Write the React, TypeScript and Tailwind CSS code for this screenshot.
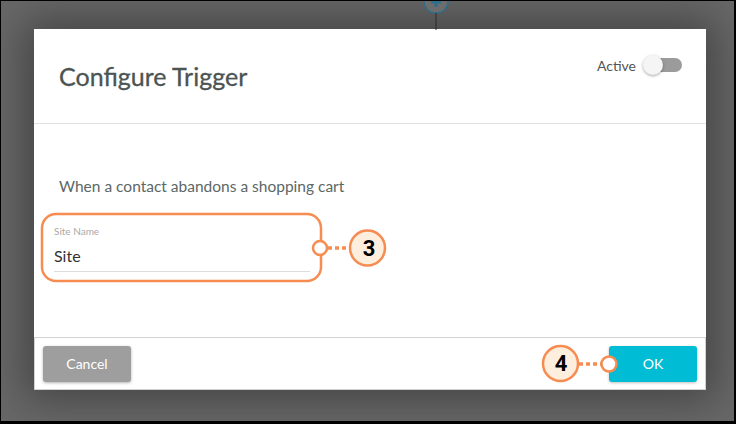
import React from "react";

export default function App() {
  return (
    <div className="relative w-[736px] h-[424px] overflow-hidden border-t border-l border-r-2 border-b-[3px] border-black bg-[#686868] font-['Lato','Noto_Sans',sans-serif]">
      {/* flow connector above modal */}
      <svg className="absolute left-[421px] top-[-1px]" width="30" height="30" viewBox="0 0 30 30">
        <circle cx="14" cy="1" r="12" fill="#6d6d6d" stroke="#2f6f8c" strokeWidth="1.5" />
        <path d="M14 -4 V7 M9 2 H19" stroke="#2f6f8c" strokeWidth="3" />
        <line x1="14" y1="13" x2="14" y2="30" stroke="#2b2b2b" strokeWidth="1" />
      </svg>

      <div className="ml-[33px] mt-[28px] w-[672px] h-[361px] bg-white flex flex-col shadow-[0_0_40px_10px_rgba(0,0,0,0.35)]">
        {/* header */}
        <div className="h-[95px] border-b border-[#e2e2e2] flex justify-between pl-[25px] pr-[24px]">
          <h1 className="self-center mt-[1px] text-[25px] leading-none text-[#4b5453] font-normal [-webkit-text-stroke:0.3px_#4b5453]">Configure Trigger</h1>
          <div className="flex items-center gap-[7px] h-[20px] mt-[26px]">
            <span className="text-[14px] text-[#555]">Active</span>
            <div className="relative w-[39px] h-[20px] flex items-center">
              <div className="ml-[3px] w-[36px] h-[14px] rounded-full bg-[#9b9b9b]" />
              <div className="absolute left-0 top-0 w-[20px] h-[20px] rounded-full bg-[#f5f5f5] shadow-[0_1px_3px_rgba(0,0,0,0.35)]" />
            </div>
          </div>
        </div>

        {/* body */}
        <div className="flex-1 flex flex-col pt-[52px]">
          <p className="pl-[25px] text-[15.5px] leading-[20px] text-[#5c6766]">When a contact abandons a shopping cart</p>
          <div className="ml-[20px] mt-[29px] w-[256px] flex flex-col">
            <span className="text-[10px] leading-[12px] text-[#a8a8a8]">Site Name</span>
            <span className="mt-[10px] text-[16px] leading-[18px] text-[#333]">Site</span>
            <div className="mt-[6px] h-px bg-[#dcdcdc]" />
          </div>
        </div>

        {/* footer */}
        <div className="h-[53px] border border-[#d2d2d2] flex items-center justify-between px-[8px]">
          <button className="w-[88px] h-[36px] rounded-[3px] bg-[#9e9e9e] text-white text-[14px] shadow-[0_1px_3px_rgba(0,0,0,0.3)]">Cancel</button>
          <button className="w-[88px] h-[36px] rounded-[3px] bg-[#00bcd4] text-white text-[14px] shadow-[0_1px_3px_rgba(0,0,0,0.25)]">OK</button>
        </div>
      </div>

      {/* annotations */}
      <svg className="absolute left-[-1px] top-[-1px]" width="736" height="424" viewBox="0 0 736 424">
        <rect x="42" y="214" width="279" height="67" rx="14" fill="none" stroke="#f68c52" strokeWidth="2.5" />
        <line x1="328" y1="248" x2="349" y2="248" stroke="#f68c52" strokeWidth="3.5" strokeDasharray="4 3" />
        <circle cx="320" cy="248" r="7" fill="#fff" stroke="#f68c52" strokeWidth="2.5" />
        <circle cx="367.5" cy="248" r="17.5" fill="#fdeedd" stroke="#f68c52" strokeWidth="2.5" />

        <line x1="579" y1="364" x2="601" y2="364" stroke="#f68c52" strokeWidth="3.5" strokeDasharray="4 3" />
        <circle cx="609" cy="364" r="7.5" fill="#fff" stroke="#f68c52" strokeWidth="2.5" />
        <circle cx="560.5" cy="363.5" r="17.5" fill="#fdeedd" stroke="#f68c52" strokeWidth="2.5" />
      </svg>
      <span className="absolute left-[357px] top-[235px] w-[22px] text-center text-[22px] leading-[26px] font-bold text-black font-['Roboto',sans-serif]">3</span>
      <span className="absolute left-[549px] top-[350px] w-[22px] text-center text-[22px] leading-[26px] font-bold text-black font-['Roboto',sans-serif]">4</span>
    </div>
  );
}
